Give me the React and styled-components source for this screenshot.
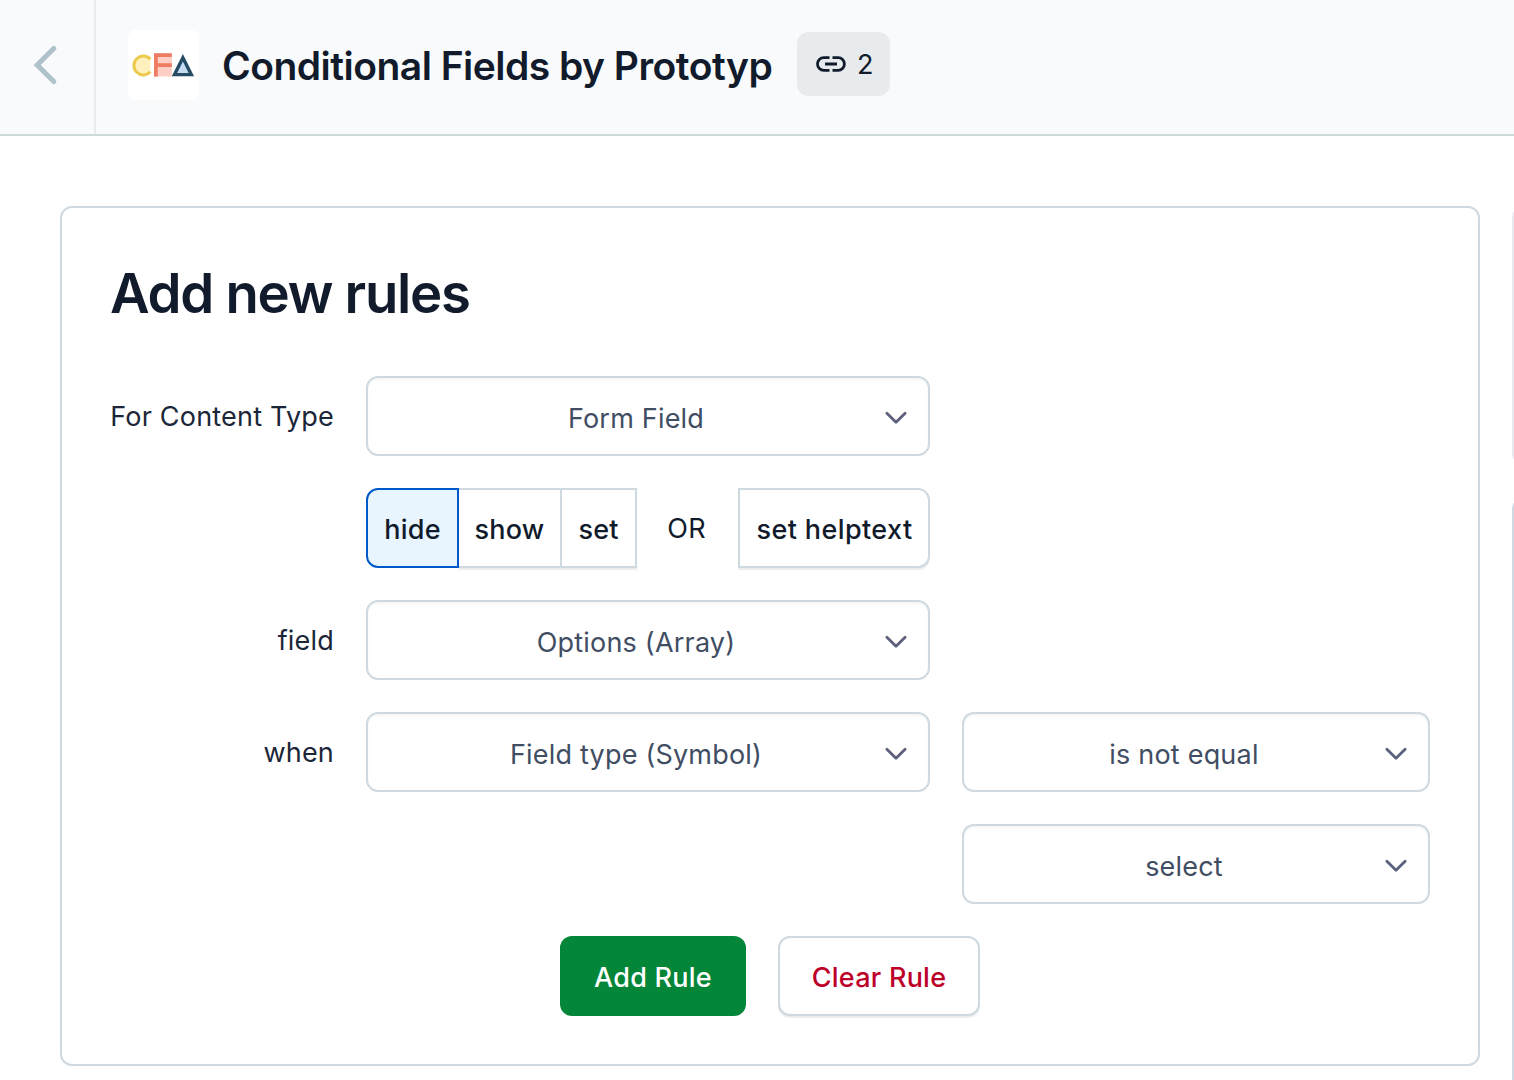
import React from 'react';
import styled, { createGlobalStyle, css } from 'styled-components';

const Global = createGlobalStyle`
  *, *::before, *::after { box-sizing: border-box; }
  html, body { margin: 0; height: 100%; }
  body {
    background: #fff;
    color: #111b2b;
    font-family: Inter, "Liberation Sans", sans-serif;
    font-size: 27px;
    letter-spacing: 0.2px;
    overflow: hidden;
  }
  button, h1, h2 { font: inherit; color: inherit; letter-spacing: inherit; margin: 0; }
`;

const Page = styled.div`
  height: 1080px;
  display: flex;
  flex-direction: column;
  overflow: hidden;
`;

const Header = styled.header`
  flex: none;
  height: 136px;
  display: flex;
  background: #f8fafc;
  border-bottom: 2px solid #ced9dc;
`;

const BackButton = styled.button`
  width: 96px;
  padding: 0 0 5px 32px;
  display: flex;
  align-items: center;
  background: none;
  border: 0;
  border-right: 2px solid #e6ebed;
`;

const HeaderBody = styled.div`
  display: flex;
  align-items: flex-start;
  padding: 30px 32px;
`;

const Logo = styled.div`
  width: 71px;
  height: 70px;
  border-radius: 8px;
  background: #fff;
`;

const AppTitle = styled.h1`
  width: 598px;
  padding-left: 23px;
  font-size: 39px;
  line-height: 71px;
  font-weight: 600;
  letter-spacing: -0.52px;
  white-space: nowrap;
`;

const UsageBadge = styled.div`
  width: 93px;
  height: 64px;
  margin-top: 2px;
  padding-left: 18px;
  display: flex;
  align-items: center;
  gap: 10px;
  border-radius: 12px;
  background: #e7ebee;
  line-height: 65px;
`;

const Main = styled.main`
  flex: 1;
  min-height: 0;
  display: flex;
  align-items: flex-start;
  gap: 32px;
  padding: 70px 0 0 60px;
`;

const RuleCard = styled.section`
  flex: none;
  width: 1420px;
  height: 860px;
  padding: 48px;
  border: 2px solid #cfd9e0;
  border-radius: 12px;
`;

const CardTitle = styled.h2`
  height: 120px;
  font-size: 54.5px;
  line-height: 74px;
  font-weight: 600;
  letter-spacing: -1.28px;
`;

const RuleGrid = styled.div`
  display: grid;
  grid-template-columns: 224px 564px 468px;
  grid-auto-rows: 80px;
  gap: 32px;
`;

const Label = styled.label`
  grid-column: 1;
  justify-self: end;
  line-height: 82px;
  white-space: nowrap;
  color: #1b2639;
`;

const SelectBox = styled.div`
  grid-column: ${(p) => p.$column || 2};
  display: flex;
  align-items: center;
  padding: 5px 19px 0 21px;
  border: 2px solid #cfd9e0;
  border-radius: 12px;
  box-shadow: inset 0 2px 2px rgba(225, 228, 232, 0.3);
  color: #414d63;
`;

const SelectText = styled.span`
  flex: 1;
  text-align: center;
`;

const ChevronIcon = styled.svg`
  flex: none;
  margin-top: -1px;
`;

const Actions = styled.div`
  grid-column: 2;
  display: flex;
`;

const Segment = styled.button`
  width: ${(p) => p.$width}px;
  flex: none;
  height: 80px;
  padding: 3px 0 0;
  border: 2px solid #cfd9e0;
  border-left-width: ${(p) => (p.$joined ? 0 : 2)}px;
  background: #fff;
  box-shadow: 0 2px 0 rgba(225, 228, 232, 0.65);
  font-weight: 500;
  white-space: nowrap;
  ${(p) => p.$active && css`
    background: #e8f5ff;
    border-color: #0059c8;
    border-radius: 12px 0 0 12px;
    box-shadow: none;
  `}
  ${(p) => p.$last && css`
    padding-left: 1px;
    border-radius: 0 12px 12px 0;
    letter-spacing: 0.4px;
  `}
`;

const Separator = styled.span`
  flex: 1;
  padding-right: 2px;
  text-align: center;
  line-height: 82px;
`;

const Footer = styled.div`
  grid-column: 1 / -1;
  display: flex;
  justify-content: center;
  gap: 32px;
`;

const ActionButton = styled.button`
  width: ${(p) => p.$width}px;
  height: 80px;
  padding: 3px 0 0;
  border: 2px solid ${(p) => (p.$primary ? '#038638' : '#cfd9e0')};
  border-radius: 12px;
  background: ${(p) => (p.$primary ? '#038638' : '#fff')};
  color: ${(p) => (p.$primary ? '#fff' : '#bd0029')};
  box-shadow: ${(p) => (p.$primary ? 'none' : '0 2px 0 rgba(225, 228, 232, 0.65)')};
  font-weight: 500;
  letter-spacing: 0.25px;
`;

const Sidebar = styled.aside`
  flex: none;
  width: 420px;
  display: flex;
  flex-direction: column;
  gap: 32px;
`;

const SidePanel = styled.div`
  height: ${(p) => p.$height}px;
  border: 2px solid ${(p) => p.$color};
  border-radius: 12px;
`;

const Chevron = () => (
  <ChevronIcon width="26" height="16" viewBox="0 0 26 16" fill="none">
    <path d="M3.9 3.2 13 12.2l9.1-9" stroke="#5a607d" strokeWidth="2.8" strokeLinecap="round" strokeLinejoin="round" />
  </ChevronIcon>
);

const Select = ({ children, column }) => (
  <SelectBox $column={column}>
    <SelectText>{children}</SelectText>
    <Chevron />
  </SelectBox>
);

const CfaLogo = () => (
  <svg width="71" height="70" viewBox="0 0 71 70">
    <path d="M22.3 29.2A9.4 9.4 0 1 0 22.3 41.8Z" fill="#fff0bd" />
    <path d="M22.3 29.2A9.4 9.4 0 1 0 22.3 41.8" fill="none" stroke="#edc94c" strokeWidth="3" />
    <path d="M26 23.2h17.8v23.3H26Z" fill="#ffcec4" />
    <path d="M27.9 46.5V25.1h15.9M27.9 35.2h15.9" fill="none" stroke="#ee7c62" strokeWidth="3.8" />
    <path d="M54.9 27.8 63.3 44.6H46.5Z" fill="#c5dcf2" stroke="#274c66" strokeWidth="3.4" />
  </svg>
);

export default function App() {
  return (
    <>
      <Global />
      <Page>
        <Header>
          <BackButton aria-label="Back">
            <svg width="28" height="42" viewBox="0 0 28 42" fill="none">
              <path d="M21.8 4.5 5.2 21 21.8 37.5" stroke="#afc1cb" strokeWidth="5" strokeLinecap="round" />
            </svg>
          </BackButton>
          <HeaderBody>
            <Logo>
              <CfaLogo />
            </Logo>
            <AppTitle>Conditional Fields by Prototyp</AppTitle>
            <UsageBadge>
              <svg width="32" height="18" viewBox="0 0 32 18" fill="none" stroke="#111b2b" strokeWidth="2.8">
                <path d="M14.5 2.7H8.8a6.3 6.3 0 0 0 0 12.6h5.7M17.5 2.7h5.6a6.3 6.3 0 0 1 0 12.6h-5.6M10 9h12" />
              </svg>
              <span>2</span>
            </UsageBadge>
          </HeaderBody>
        </Header>
        <Main>
          <RuleCard>
            <CardTitle>Add new rules</CardTitle>
            <RuleGrid>
              <Label>For Content Type</Label>
              <Select>Form Field</Select>
              <Actions>
                <Segment $width={93} $active>hide</Segment>
                <Segment $width={103} $joined>show</Segment>
                <Segment $width={75} $joined>set</Segment>
                <Separator>OR</Separator>
                <Segment $width={192} $last>set helptext</Segment>
              </Actions>
              <Label>field</Label>
              <Select>Options (Array)</Select>
              <Label>when</Label>
              <Select>Field type (Symbol)</Select>
              <Select column={3}>is not equal</Select>
              <Select column={3}>select</Select>
              <Footer>
                <ActionButton $width={186} $primary>Add Rule</ActionButton>
                <ActionButton $width={202}>Clear Rule</ActionButton>
              </Footer>
            </RuleGrid>
          </RuleCard>
          <Sidebar>
            <SidePanel $height={259} $color="#e7e9ee" />
            <SidePanel $height={700} $color="#cfd9e0" />
          </Sidebar>
        </Main>
      </Page>
    </>
  );
}
